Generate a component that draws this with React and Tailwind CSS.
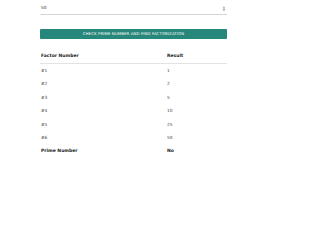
export default function App() {
  const rows = [
    ["#1", "1"],
    ["#2", "2"],
    ["#3", "5"],
    ["#4", "10"],
    ["#5", "25"],
    ["#6", "50"],
  ];
  return (
    <div className="w-[267px] h-[200px] bg-white px-[40px] text-[#222]" style={{ fontFamily: '"DejaVu Sans", sans-serif' }}>
      <div className="flex items-center justify-between h-[15px] pt-[3px] border-b border-[#d6d6d6] pl-[1px] pr-[2px]">
        <span className="text-[4.3px] text-[#333]">50</span>
        <div className="flex flex-col items-center leading-none text-[#aaa]">
          <span className="text-[3px]">▲</span>
          <span className="text-[3px]">▼</span>
        </div>
      </div>
      <div className="mt-[14px] h-[10px] bg-[#27877a] flex items-center justify-center rounded-[1px]">
        <span className="text-[3.9px] text-white tracking-[0.1px]">CHECK PRIME NUMBER AND FIND FACTORIZATION</span>
      </div>
      <div className="mt-[11px]">
        <div className="grid grid-cols-[127px_1fr] h-[14px] items-center border-b border-[#e3e3e3] text-[4.5px] font-bold">
          <span className="pl-[1px]">Factor Number</span>
          <span>Result</span>
        </div>
        {rows.map(([a, b]) => (
          <div key={a} className="grid grid-cols-[127px_1fr] h-[13.5px] items-center text-[4.3px] text-[#444]">
            <span className="pl-[1px]">{a}</span>
            <span>{b}</span>
          </div>
        ))}
        <div className="grid grid-cols-[127px_1fr] h-[13.5px] items-center text-[4.5px] font-bold">
          <span className="pl-[1px]">Prime Number</span>
          <span>No</span>
        </div>
      </div>
    </div>
  );
}
